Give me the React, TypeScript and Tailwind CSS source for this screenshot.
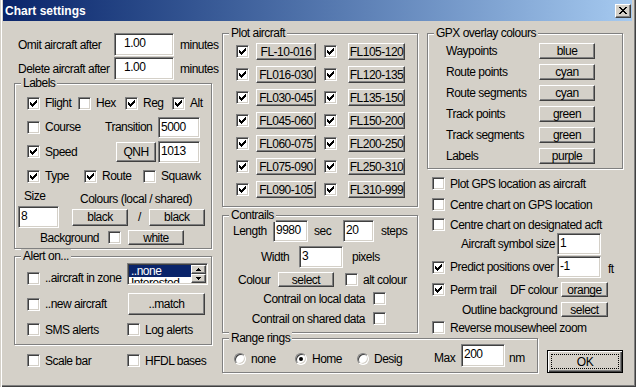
import React from "react";

const sunken =
  "border border-t-[#808080] border-l-[#808080] border-r-white border-b-white shadow-[inset_1px_1px_0_#404040,inset_-1px_-1px_0_#d4d0c8]";
const raised =
  "border border-t-white border-l-white border-r-[#404040] border-b-[#404040] shadow-[inset_-1px_-1px_0_#808080] bg-[#d4d0c8]";

function Check({ on = false }: { on?: boolean }) {
  return (
    <span className={`relative block w-[13px] h-[13px] shrink-0 bg-white ${sunken}`}>
      {on && (
        <svg
          className="absolute left-[2px] top-[2px]"
          width="7"
          height="7"
          viewBox="0 0 7 7"
          shapeRendering="crispEdges"
        >
          <path
            d="M0 2h1v3H0zM1 3h1v3H1zM2 4h1v3H2zM3 3h1v3H3zM4 2h1v3H4zM5 1h1v3H5zM6 0h1v3H6z"
            fill="#000"
          />
        </svg>
      )}
    </span>
  );
}

function CheckLabel({ label, on = false, w = "" }: { label: string; on?: boolean; w?: string }) {
  return (
    <div className={`flex items-center shrink-0 ${w}`}>
      <Check on={on} />
      <span className="ml-[5px]">{label}</span>
    </div>
  );
}

function Radio({ on = false }: { on?: boolean }) {
  return (
    <span className="relative block w-[12px] h-[12px] shrink-0 rounded-full bg-white border border-t-[#808080] border-l-[#808080] border-r-white border-b-white shadow-[inset_1px_1px_0_#404040,inset_-1px_-1px_0_#d4d0c8]">
      {on && <span className="absolute left-[3px] top-[3px] w-[4px] h-[4px] rounded-full bg-black" />}
    </span>
  );
}

function RadioLabel({ label, on = false, w = "" }: { label: string; on?: boolean; w?: string }) {
  return (
    <div className={`flex items-center mt-[8px] shrink-0 ${w}`}>
      <Radio on={on} />
      <span className="ml-[5px]">{label}</span>
    </div>
  );
}

function Field({ v, className = "", pad = "pl-[2px]" }: { v: string; className?: string; pad?: string }) {
  return <div className={`shrink-0 bg-white pt-[2px] ${pad} ${sunken} ${className}`}>{v}</div>;
}

function Btn({ children, className = "" }: { children?: React.ReactNode; className?: string }) {
  return (
    <div className={`shrink-0 flex items-center justify-center leading-none ${raised} ${className}`}>
      {children}
    </div>
  );
}

function Group({
  title,
  className = "",
  children,
}: {
  title: string;
  className?: string;
  children?: React.ReactNode;
}) {
  return (
    <div className={`relative shrink-0 border border-[#808080] shadow-[1px_1px_0_#fff,inset_1px_1px_0_#fff] ${className}`}>
      <span className="absolute left-[6px] top-[-8px] bg-[#d4d0c8] px-[2px] leading-[14px]">{title}</span>
      {children}
    </div>
  );
}

function SpinArrow({ up }: { up?: boolean }) {
  return (
    <svg width="5" height="3" viewBox="0 0 5 3" shapeRendering="crispEdges">
      <path d={up ? "M2 0h1v1H2zM1 1h3v1H1zM0 2h5v1H0z" : "M0 0h5v1H0zM1 1h3v1H1zM2 2h1v1H2z"} fill="#000" />
    </svg>
  );
}

function LeftColumn() {
  return (
    <div className="w-[199px] shrink-0 flex flex-col">
      <div className="flex items-center h-[23px]">
        <span className="ml-[4px] w-[96px] shrink-0">Omit aircraft after</span>
        <Field v="1.00" className="w-[60px] h-[23px]" pad="pl-[9px]" />
        <span className="ml-[6px]">minutes</span>
      </div>
      <div className="flex items-center h-[23px] mt-[1px]">
        <span className="ml-[4px] w-[96px] shrink-0">Delete aircraft after</span>
        <Field v="1.00" className="w-[60px] h-[23px]" pad="pl-[9px]" />
        <span className="ml-[6px]">minutes</span>
      </div>

      <Group title="Labels" className="mt-[3px] h-[166px] w-[198px]">
        <div className="mt-[7px] h-[24px] flex items-center pl-[12px]">
          <CheckLabel label="Flight" on w="w-[51px]" />
          <CheckLabel label="Hex" w="w-[47px]" />
          <CheckLabel label="Reg" on w="w-[47px]" />
          <CheckLabel label="Alt" on />
        </div>
        <div className="h-[24px] flex items-center pl-[12px]">
          <CheckLabel label="Course" w="w-[78px]" />
          <span className="w-[53px] shrink-0">Transition</span>
          <Field v="5000" className="w-[42px] h-[21px]" />
        </div>
        <div className="h-[25px] flex items-center pl-[12px]">
          <CheckLabel label="Speed" on w="w-[89px]" />
          <Btn className="w-[40px] h-[20px]">QNH</Btn>
          <Field v="1013" className="ml-[2px] w-[42px] h-[22px]" />
        </div>
        <div className="h-[24px] flex items-center pl-[12px]">
          <CheckLabel label="Type" on w="w-[57px]" />
          <CheckLabel label="Route" on w="w-[59px]" />
          <CheckLabel label="Squawk" />
        </div>
        <div className="h-[18px] flex items-start">
          <span className="ml-[9px] mt-[1px] w-[56px] shrink-0">Size</span>
          <span className="mt-[4px]">Colours (local / shared)</span>
        </div>
        <div className="h-[22px] flex items-center">
          <Field v="8" className="ml-[3px] w-[41px] h-[22px]" />
          <Btn className="ml-[13px] w-[56px] h-[17px]">black</Btn>
          <span className="ml-[10px]">/</span>
          <Btn className="ml-[8px] w-[56px] h-[17px]">black</Btn>
        </div>
        <div className="mt-[2px] h-[15px] flex items-center">
          <span className="ml-[25px] w-[68px] shrink-0">Background</span>
          <Check />
          <Btn className="ml-[7px] w-[56px] h-[15px]">white</Btn>
        </div>
      </Group>

      <Group title="Alert on..." className="mt-[7px] h-[89px] w-[198px]">
        <div className="mt-[6px] h-[22px] flex items-end pl-[12px]">
          <CheckLabel label="..aircraft in zone" w="w-[100px]" />
          <div className={`w-[81px] h-[22px] shrink-0 bg-white p-[1px] flex ${sunken}`}>
            <div className="flex-1 flex flex-col overflow-hidden leading-[12px]">
              <div className="h-[12px] bg-[#0a246a] text-white pl-[2px]">..none</div>
              <div className="pl-[2px]">Interested</div>
            </div>
            <div className="w-[15px] flex flex-col">
              <Btn className="h-[9px] w-[15px]">
                <SpinArrow up />
              </Btn>
              <Btn className="h-[9px] w-[15px]">
                <SpinArrow />
              </Btn>
            </div>
          </div>
        </div>
        <div className="mt-[8px] h-[22px] flex items-center pl-[12px]">
          <CheckLabel label="..new aircraft" w="w-[101px]" />
          <Btn className="w-[77px] h-[22px]">..match</Btn>
        </div>
        <div className="mt-[7px] h-[15px] flex items-center pl-[12px]">
          <CheckLabel label="SMS alerts" w="w-[100px]" />
          <CheckLabel label="Log alerts" />
        </div>
      </Group>

      <div className="mt-[8px] h-[15px] flex items-center pl-[13px]">
        <CheckLabel label="Scale bar" w="w-[100px]" />
        <CheckLabel label="HFDL bases" />
      </div>
    </div>
  );
}

const flRows = [
  ["FL-10-016", "FL105-120"],
  ["FL016-030", "FL120-135"],
  ["FL030-045", "FL135-150"],
  ["FL045-060", "FL150-200"],
  ["FL060-075", "FL200-250"],
  ["FL075-090", "FL250-310"],
  ["FL090-105", "FL310-999"],
];

function PlotColumn() {
  return (
    <div className="w-[196px] shrink-0 flex flex-col">
      <Group title="Plot aircraft" className="h-[174px]">
        <div className="flex flex-col gap-[6px] pt-[9px] pl-[13px]">
          {flRows.map(([a, b]) => (
            <div key={a} className="flex items-center h-[17px]">
              <Check on />
              <Btn className="ml-[7px] w-[60px] h-[17px]">{a}</Btn>
              <span className="ml-[8px]">
                <Check on />
              </span>
              <Btn className="ml-[11px] w-[57px] h-[17px]">{b}</Btn>
            </div>
          ))}
        </div>
      </Group>

      <Group title="Contrails" className="mt-[8px] h-[118px]">
        <div className="mt-[4px] h-[22px] flex items-center">
          <span className="ml-[10px] w-[40px] shrink-0">Length</span>
          <Field v="9980" className="w-[35px] h-[22px]" />
          <span className="ml-[6px] w-[29px] shrink-0">sec</span>
          <Field v="20" className="w-[31px] h-[22px]" />
          <span className="ml-[7px]">steps</span>
        </div>
        <div className="mt-[4px] h-[22px] flex items-center">
          <span className="ml-[38px] w-[38px] shrink-0">Width</span>
          <Field v="3" className="w-[44px] h-[22px]" />
          <span className="ml-[9px]">pixels</span>
        </div>
        <div className="mt-[4px] h-[15px] flex items-center">
          <span className="ml-[15px] w-[40px] shrink-0">Colour</span>
          <Btn className="w-[56px] h-[15px]">select</Btn>
          <span className="ml-[11px]">
            <Check />
          </span>
          <span className="ml-[5px]">alt colour</span>
        </div>
        <div className="mt-[5px] h-[13px] flex items-center justify-end pr-[31px]">
          <span className="mr-[8px]">Contrail on local data</span>
          <Check />
        </div>
        <div className="mt-[7px] h-[13px] flex items-center justify-end pr-[31px]">
          <span className="mr-[8px]">Contrail on shared data</span>
          <Check />
        </div>
      </Group>
    </div>
  );
}

const gpx = [
  ["Waypoints", "blue"],
  ["Route points", "cyan"],
  ["Route segments", "cyan"],
  ["Track points", "green"],
  ["Track segments", "green"],
  ["Labels", "purple"],
];

function RightColumn() {
  return (
    <div className="ml-[9px] w-[196px] shrink-0 flex flex-col">
      <Group title="GPX overlay colours" className="h-[136px]">
        <div className="flex flex-col gap-[5px] pt-[9px]">
          {gpx.map(([l, c]) => (
            <div key={l} className="flex items-center h-[16px]">
              <span className="ml-[18px] w-[93px] shrink-0">{l}</span>
              <Btn className="w-[56px] h-[16px]">{c}</Btn>
            </div>
          ))}
        </div>
      </Group>

      <div className="mt-[8px] h-[13px] flex items-center pl-[5px]">
        <CheckLabel label="Plot GPS location as aircraft" />
      </div>
      <div className="mt-[8px] h-[13px] flex items-center pl-[5px]">
        <CheckLabel label="Centre chart on GPS location" />
      </div>
      <div className="mt-[7px] h-[13px] flex items-center pl-[5px]">
        <CheckLabel label="Centre chart on designated acft" />
      </div>
      <div className="mt-[2px] h-[22px] flex items-center">
        <span className="ml-[34px] w-[96px] shrink-0">Aircraft symbol size</span>
        <Field v="1" className="w-[44px] h-[22px]" />
      </div>
      <div className="mt-[1px] h-[22px] flex items-center pl-[5px]">
        <CheckLabel label="Predict positions over" on w="w-[125px]" />
        <Field v="-1" className="w-[44px] h-[22px]" />
        <span className="ml-[7px] mt-[3px]">ft</span>
      </div>
      <div className="mt-[4px] h-[15px] flex items-center pl-[5px]">
        <CheckLabel label="Perm trail" on w="w-[78px]" />
        <span className="w-[51px] shrink-0">DF colour</span>
        <Btn className="w-[47px] h-[15px]">orange</Btn>
      </div>
      <div className="mt-[5px] h-[15px] flex items-center">
        <span className="ml-[35px] w-[99px] shrink-0">Outline background</span>
        <Btn className="w-[47px] h-[15px]">select</Btn>
      </div>
      <div className="mt-[4px] h-[13px] flex items-center pl-[5px]">
        <CheckLabel label="Reverse mousewheel zoom" />
      </div>
    </div>
  );
}

function BottomRow() {
  return (
    <div className="mt-[5px] flex items-start">
      <Group title="Range rings" className="w-[316px] h-[35px]">
        <div className="mt-[5px] h-[23px] flex items-start pl-[11px]">
          <RadioLabel label="none" w="w-[61px]" />
          <RadioLabel label="Home" on w="w-[62px]" />
          <RadioLabel label="Desig" w="w-[77px]" />
          <span className="mt-[7px] w-[27px] shrink-0">Max</span>
          <Field v="200" className="w-[44px] h-[23px]" />
          <span className="mt-[7px] ml-[4px]">nm</span>
        </div>
      </Group>
      <div className="ml-[9px] mt-[12px] w-[76px] h-[23px] shrink-0 border border-black bg-[#d4d0c8] p-[3px] shadow-[inset_1px_1px_0_#fff,inset_-1px_-1px_0_#404040,inset_-2px_-2px_0_#808080]">
        <div className="w-full h-full border border-dotted border-black flex items-center justify-center leading-none">
          OK
        </div>
      </div>
    </div>
  );
}

export default function App() {
  return (
    <div className="w-[636px] h-[387px] overflow-hidden whitespace-nowrap bg-[#d4d0c8] pl-[3px] pr-[4px] text-[12px] tracking-[-0.5px] leading-[14px] text-black font-['Liberation_Sans',Arial,sans-serif] shadow-[inset_1px_0_0_#d4d0c8,inset_2px_0_0_#fff,inset_-1px_-1px_0_#404040,inset_-2px_-2px_0_#808080]">
      {/* title bar */}
      <div className="h-[21px] flex items-center justify-between bg-linear-to-r from-[#0a246a] to-[#a6caf0] pl-[2px] pr-[1px]">
        <span className="font-bold text-[12px] tracking-normal text-white">Chart settings</span>
        <Btn className="w-[16px] h-[14px]">
          <svg width="8" height="7" viewBox="0 0 8 7" shapeRendering="crispEdges">
            <path
              d="M0 0h2v1H0zM6 0h2v1H6zM1 1h2v1H1zM5 1h2v1H5zM2 2h4v1H2zM3 3h2v1H3zM2 4h4v1H2zM1 5h2v1H1zM5 5h2v1H5zM0 6h2v1H0zM6 6h2v1H6z"
              fill="#000"
            />
          </svg>
        </Btn>
      </div>

      <div className="flex pl-[11px] pt-[12px]">
        <LeftColumn />
        <div className="ml-[9px] flex flex-col">
          <div className="flex h-[300px]">
            <PlotColumn />
            <RightColumn />
          </div>
          <BottomRow />
        </div>
      </div>
    </div>
  );
}
